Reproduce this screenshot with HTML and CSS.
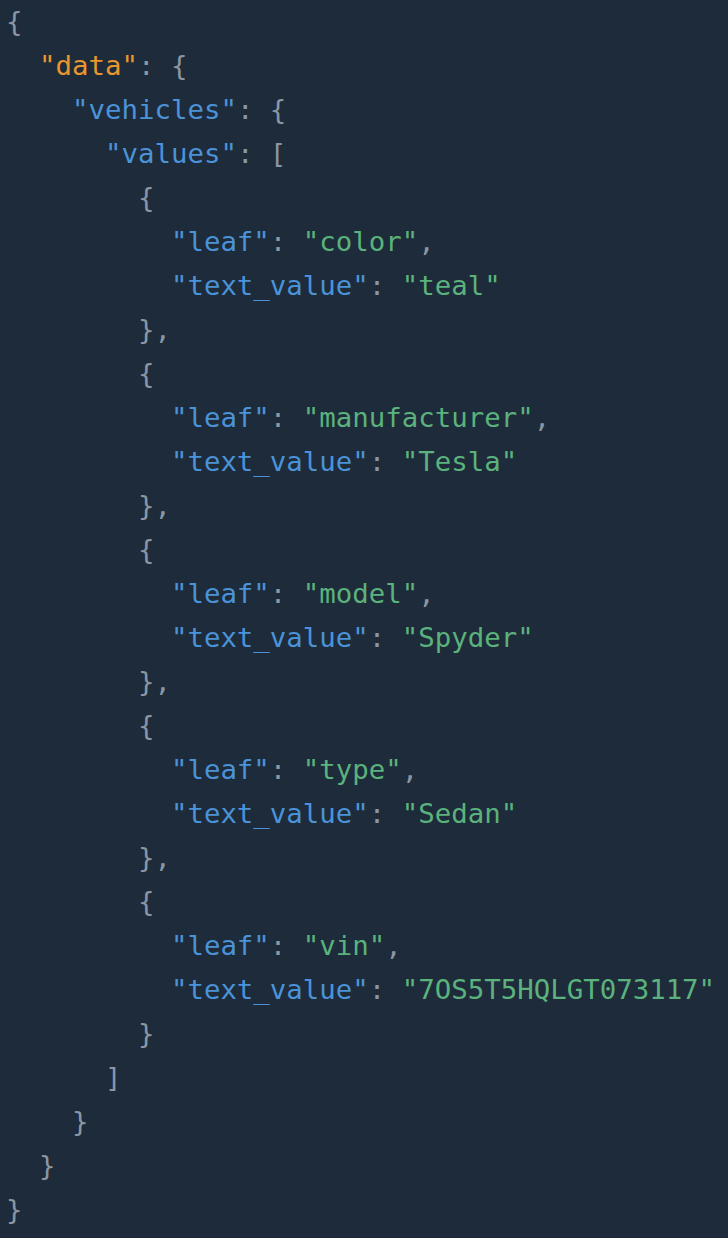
FILE: index.html
```html
<!DOCTYPE html>
<html>
<head>
<meta charset="utf-8">
<link rel="stylesheet" href="styles.css">
</head>
<body>
<pre class="code"><span class="p">{</span>
  <span class="k0">"data"</span><span class="p">: {</span>
    <span class="k">"vehicles"</span><span class="p">: {</span>
      <span class="k">"values"</span><span class="p">: [</span>
        <span class="p">{</span>
          <span class="k">"leaf"</span><span class="p">: </span><span class="s">"color"</span><span class="p">,</span>
          <span class="k">"text_value"</span><span class="p">: </span><span class="s">"teal"</span>
        <span class="p">},</span>
        <span class="p">{</span>
          <span class="k">"leaf"</span><span class="p">: </span><span class="s">"manufacturer"</span><span class="p">,</span>
          <span class="k">"text_value"</span><span class="p">: </span><span class="s">"Tesla"</span>
        <span class="p">},</span>
        <span class="p">{</span>
          <span class="k">"leaf"</span><span class="p">: </span><span class="s">"model"</span><span class="p">,</span>
          <span class="k">"text_value"</span><span class="p">: </span><span class="s">"Spyder"</span>
        <span class="p">},</span>
        <span class="p">{</span>
          <span class="k">"leaf"</span><span class="p">: </span><span class="s">"type"</span><span class="p">,</span>
          <span class="k">"text_value"</span><span class="p">: </span><span class="s">"Sedan"</span>
        <span class="p">},</span>
        <span class="p">{</span>
          <span class="k">"leaf"</span><span class="p">: </span><span class="s">"vin"</span><span class="p">,</span>
          <span class="k">"text_value"</span><span class="p">: </span><span class="s">"7OS5T5HQLGT073117"</span>
        <span class="p">}</span>
      <span class="p">]</span>
    <span class="p">}</span>
  <span class="p">}</span>
<span class="p">}</span></pre>
</body>
</html>
```

FILE: styles.css
```css
html, body {
  margin: 0;
  padding: 0;
  background: #1d2b3a;
  height: 100%;
}
.code {
  margin: 0;
  padding: 0 0 0 6px;
  font-family: "DejaVu Sans Mono", monospace;
  font-size: 27.4px;
  line-height: 44px;
  color: #8a96a3;
}
.p { color: #8a96a3; }
.k0 { color: #e8962e; }
.k { color: #4b93d8; }
.s { color: #5bb27c; }
```
